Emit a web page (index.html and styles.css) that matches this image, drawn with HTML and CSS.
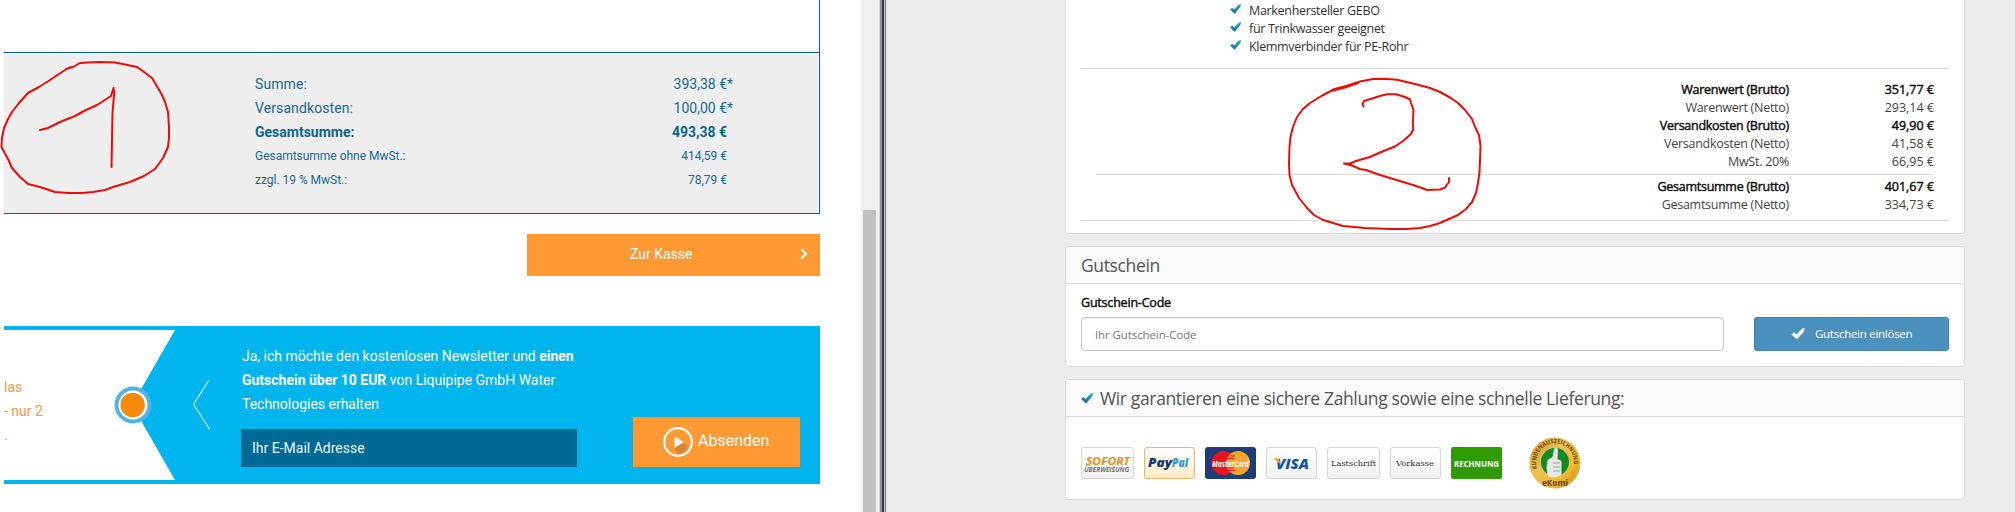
FILE: index.html
```html
<!DOCTYPE html>
<html lang="de">
<head>
<meta charset="utf-8">
<title>Warenkorb</title>
<link rel="stylesheet" href="styles.css">
</head>
<body>
<svg class="defs" width="0" height="0">
  <defs>
    <linearGradient id="teal" x1="0" y1="0" x2="0" y2="1"><stop offset="0" stop-color="#3aaed0"/><stop offset="1" stop-color="#11678f"/></linearGradient>
    <linearGradient id="gold" x1="0" y1="0" x2="1" y2="1"><stop offset="0" stop-color="#c98a1c"/><stop offset=".4" stop-color="#f0c356"/><stop offset=".7" stop-color="#f2b92f"/><stop offset="1" stop-color="#b87412"/></linearGradient>
    <symbol id="tick" viewBox="0 0 12 11"><path d="M0 6 2.400 4l2.200 2L9.600.600 12 0 11.600 3 5 10.600Z"/></symbol>
  </defs>
</svg>
<div class="screen">
  <section class="shop-a">
    <div class="items"></div>
    <dl class="totals">
      <div><dt>Summe:</dt><dd>393,38 €<i>*</i></dd></div>
      <div><dt>Versandkosten:</dt><dd>100,00 €<i>*</i></dd></div>
      <div class="strong"><dt>Gesamtsumme:</dt><dd>493,38 €<i></i></dd></div>
      <div class="small"><dt>Gesamtsumme ohne MwSt.:</dt><dd>414,59 €<i></i></dd></div>
      <div class="small"><dt>zzgl. 19 % MwSt.:</dt><dd>78,79 €<i></i></dd></div>
    </dl>
    <div class="checkout"><span>Zur Kasse</span>
      <svg width="8" height="12" viewBox="0 0 8 12"><path d="M1.300 1.200 6 6 1.300 10.800" fill="none" stroke="#fff" stroke-width="2"/></svg>
    </div>
    <div class="newsletter">
      <div class="teaser">
        <svg class="teaser-shape" width="220" height="150" viewBox="0 0 220 150">
          <path d="M0 0H171L128 75 171 150H0Z" fill="#fff"/>
          <circle cx="129" cy="75" r="18.500" fill="#52b2e6"/><circle cx="129" cy="75" r="14.500" fill="#fff"/><circle cx="128.600" cy="75" r="12.200" fill="#f68a0c"/>
          <path d="M205 50 189.500 74.500 205.500 99" fill="none" stroke="#c9f1ff" stroke-width="1.200"/>
        </svg>
        <p>las<br>- nur 2<br>.</p>
      </div>
      <div class="signup">
        <p>Ja, ich möchte den kostenlosen Newsletter und <b>einen</b><br><b>Gutschein über 10 EUR</b> von Liquipipe GmbH Water<br>Technologies erhalten</p>
        <div class="email">Ihr E-Mail Adresse</div>
      </div>
      <div class="send">
        <svg width="30" height="30" viewBox="0 0 30 30"><path d="m21 15 4 5a12 12 0 0 1-10 7l-4-6Z" fill="#d98530"/><circle cx="15" cy="15" r="13.800" fill="none" stroke="#fff" stroke-width="2.200"/><path d="M11.500 9.500 21 15l-9.500 6Z" fill="#fff"/></svg>
        <span>Absenden</span>
      </div>
    </div>
  </section>
  <div class="scrollbar"><div class="thumb"></div></div>
  <div class="frame"></div>
  <section class="shop-b">
    <div class="panel cart">
      <ul class="features">
        <li><svg width="11" height="10"><use href="#tick" fill="url(#teal)"/></svg><span>Markenhersteller GEBO</span></li>
        <li><svg width="11" height="10"><use href="#tick" fill="url(#teal)"/></svg><span>für Trinkwasser geeignet</span></li>
        <li><svg width="11" height="10"><use href="#tick" fill="url(#teal)"/></svg><span>Klemmverbinder für PE-Rohr</span></li>
      </ul>
      <div class="sums">
        <dl class="rows">
          <div class="gross"><dt>Warenwert (Brutto)</dt><dd>351,77 €</dd></div>
          <div><dt>Warenwert (Netto)</dt><dd>293,14 €</dd></div>
          <div class="gross"><dt>Versandkosten (Brutto)</dt><dd>49,90 €</dd></div>
          <div><dt>Versandkosten (Netto)</dt><dd>41,58 €</dd></div>
          <div><dt>MwSt. 20%</dt><dd>66,95 €</dd></div>
        </dl>
        <dl class="rows grand">
          <div class="gross"><dt>Gesamtsumme (Brutto)</dt><dd>401,67 €</dd></div>
          <div><dt>Gesamtsumme (Netto)</dt><dd>334,73 €</dd></div>
        </dl>
      </div>
    </div>
    <div class="panel">
      <h2>Gutschein</h2>
      <div class="voucher">
        <label>Gutschein-Code</label>
        <div class="line">
          <div class="code">Ihr Gutschein-Code</div>
          <div class="redeem"><svg width="14" height="12"><use href="#tick" fill="#fff"/></svg><span>Gutschein einlösen</span></div>
        </div>
      </div>
    </div>
    <div class="panel">
      <h2 class="guarantee"><svg width="12" height="11"><use href="#tick" fill="url(#teal)"/></svg><span>Wir garantieren eine sichere Zahlung sowie eine schnelle Lieferung:</span></h2>
      <div class="cards">
        <div class="card sofort"><svg width="51" height="30"><text x="4" y="17" textLength="44" lengthAdjust="spacingAndGlyphs" font-size="11" font-weight="700" fill="#ef8a13">SOFORT</text><text x="2" y="24" textLength="45" lengthAdjust="spacingAndGlyphs" font-size="6.500" font-weight="600" fill="#555">ÜBERWEISUNG</text></svg></div>
        <div class="card paypal"><svg width="49" height="30"><text x="3" y="19" textLength="24" lengthAdjust="spacingAndGlyphs" font-size="13" font-weight="800" fill="#14386e">Pay</text><text x="27" y="19" textLength="16" lengthAdjust="spacingAndGlyphs" font-size="13" font-weight="800" fill="#2f9bd6">Pal</text></svg></div>
        <div class="card master"><svg width="51" height="32"><circle cx="18.500" cy="16" r="12" fill="#e8131c"/><circle cx="33" cy="16" r="12" fill="#f3a62a"/><path d="M22 9h8M21 11.500h8M21 21h8M22 23.500h8" stroke="#e8131c"/><text x="7" y="19.500" textLength="37" lengthAdjust="spacingAndGlyphs" font-size="8.500" font-weight="700" fill="#fff">MasterCard</text></svg></div>
        <div class="card"><svg width="49" height="30"><text x="9" y="21" textLength="33" lengthAdjust="spacingAndGlyphs" font-size="14.500" font-weight="800" fill="#15539b">VISA</text><path d="M6.500 10.300h5l2 6Z" fill="#f0a81c"/></svg></div>
        <div class="card serif"><svg width="51" height="30"><text x="3" y="18" textLength="45" lengthAdjust="spacingAndGlyphs" font-size="8">Lastschrift</text></svg></div>
        <div class="card serif"><svg width="49" height="30"><text x="5" y="18" textLength="38" lengthAdjust="spacingAndGlyphs" font-size="8">Vorkasse</text></svg></div>
        <div class="card invoice"><svg width="51" height="32"><text x="3" y="19.500" textLength="45" lengthAdjust="spacingAndGlyphs" font-size="9.500" font-weight="700" fill="#fff">RECHNUNG</text></svg></div>
        <svg class="seal" width="52" height="52" viewBox="0 0 52 52">
          <circle cx="26" cy="26" r="25.500" fill="url(#gold)"/><circle cx="26" cy="26" r="24" fill="none" stroke="#e9b94c"/>
          <path id="arc" d="M8.100 31.600A19 19 0 1 1 43.900 31.600" fill="none"/>
          <text class="seal-ring"><textPath href="#arc" textLength="68" lengthAdjust="spacingAndGlyphs">KUNDENAUSZEICHNUNG</textPath></text>
          <circle cx="26" cy="25" r="15" fill="#d9c25c"/><circle cx="26" cy="25" r="14" fill="#168a22"/>
          <path d="M25 12q3-3 4 1l-.500 9 4 2v14l-5 2q-7 1-9-2l-1-8 1-7 5-3Z" fill="#e4e8e4"/>
          <path d="M24 26h7M24 30h7M24 34h7" stroke="#9aa69c"/>
          <text class="seal-name" x="13" y="48.500" textLength="26" lengthAdjust="spacingAndGlyphs">eKomi</text>
        </svg>
      </div>
    </div>
  </section>
  <svg class="marks" width="2015" height="512">
    <polyline points="66,69 73,67 80,63 88,62.500 100,62 115,62.500 125,64.500 137,67 144,72 152,78 158,88 162,95 165,102 168,112 169,127 169,138 168,147 163,158 155,169 144,176 130,182 113,187 105,190 93,192 82,193 68,193 55,192 40,187 28,184 20,177 12,168 9,161 1.500,147 2,138 4,128 8,119 12,112 19,103 28,93 39,87 50,80 62,72 70,67"/>
    <polyline points="40,130 48,128 60,122 75,116 86,110 97,105 111,96 113.500,88 114.200,93 112.500,113 112,140 111.500,167"/>
    <polyline points="1323,95.500 1333,89.500 1346,86 1360,81.500 1373,79 1385,78.800 1397,79.700 1417,84.500 1430,88 1440,92 1450,97.500 1458,103 1465,110 1472,119 1475,127 1479,135 1480.500,146 1480,160 1479.500,172 1478,183 1476,193 1472,202 1466,209 1458,215 1440,223 1430,226 1420,228 1406,229 1390,229 1365,228 1343,226 1333,223 1323,220 1314,215 1307,208 1299,198 1292,185 1289.500,175 1289,163 1289.500,147 1290.500,137 1293,127 1297,117 1303,109 1310,103 1323,95 1331,91 1345,87.500 1358,83"/>
    <polyline points="1363.500,106.500 1362.500,104 1364,101 1380,96 1387,94.200 1396,94.300 1405,97 1410,99.500 1411,103 1413.500,110 1412.800,123 1413.300,129 1411,134 1403,141 1395,146.500 1380,152.500 1370,157 1356,161 1350,163.500 1344,163.500 1352,165.500 1360,169 1366,170 1380,175 1413,185 1422,188 1427,190 1440,189.500 1445,187.500 1449,182 1449,178"/>
  </svg>
</div>
</body>
</html>
```
FILE: styles.css
```css
* { box-sizing: border-box; }
body { margin: 0; background: #fff; }
dl, dd, dt, p, ul, h2 { margin: 0; padding: 0; }
svg { display: block; flex: none; }
.defs { position: absolute; }
.screen { position: relative; display: flex; width: 2015px; height: 512px; overflow: hidden; }

.shop-a { width: 861px; padding: 0 41px 0 4px; font: 14px/24px Roboto, sans-serif; color: #176a91; }
.items { height: 52px; border-right: 1px solid #0b668e; }
.totals { height: 162px; padding: 19px 86px 0 251px; background: #eee; border: solid #0b668e; border-width: 1px 1px 1px 0; }
.totals div { display: flex; justify-content: space-between; height: 24px; }
.totals dt { letter-spacing: .1px; }
.totals i { display: inline-block; width: 6px; font-style: normal; }
.totals .strong { font-weight: 700; color: #0b668e; }
.totals .strong dt { letter-spacing: 0; }
.totals .small { font-size: 12px; }
.totals .small dt { letter-spacing: -.02px; }
.checkout { display: flex; align-items: center; width: 293px; height: 42px; margin: 20px 0 50px auto; padding: 0 12px 2px 103px; background: #f93; color: #fff; justify-content: space-between; }
.newsletter { display: flex; height: 158px; padding: 4px 0; background: #00b5ee; color: #fff; }
.teaser { position: relative; width: 237px; height: 150px; }
.teaser p { position: absolute; top: 45px; left: 0; color: #f0964c; }
.signup { width: 336px; padding-top: 14px; }
.signup p { padding-left: 1px; white-space: nowrap; letter-spacing: -.01px; }
.email { height: 38px; margin-top: 13px; padding: 0 11px; line-height: 38px; background: #006a94; color: #e8f6fc; }
.send { display: flex; gap: 5px; width: 167px; height: 50px; margin: 87px 0 0 56px; padding: 10px 0 0 30px; background: #f93; font-size: 16px; line-height: 27px; box-shadow: 0 0 1px #a98a50; }

.scrollbar { width: 18px; padding: 210px 3px 0 2px; background: #f0f0f0; }
.thumb { height: 302px; background: #c1c1c1; }
.frame { width: 8px; background: linear-gradient(90deg, #d8d8d8 0 1px, #8b9091 1px 3px, #3a4044 3px 5px, #b4b9bd 5px 6px, #82888e 6px 7px, #e2e2e2 7px); }

.shop-b { flex: 1; padding: 0 50px 0 178px; background: #ececec; font: 12.500px/18px "Open Sans", "Noto Sans", sans-serif; color: #444; }
.panel { height: 121px; margin-bottom: 12px; background: #fff; border: 1px solid #dadada; border-radius: 3px; }
.cart { height: 234px; border-top: 0; border-radius: 0 0 3px 3px; padding: 2px 15px 0; }
.features { height: 66px; padding-left: 149px; list-style: none; color: #333; letter-spacing: -.32px; }
.features li { display: flex; gap: 8px; padding-top: 2px; height: 18px; line-height: 14px; }
.sums { height: 153px; padding: 12px 15px 0; border: solid #d9d9d9; border-width: 1px 0; }
.rows { height: 93px; }
.rows div { display: flex; justify-content: flex-end; text-align: right; }
.rows dt { letter-spacing: -.26px; }
.rows dd { width: 145px; }
.rows .gross, .voucher label { color: #111; -webkit-text-stroke: .45px #111; }
.grand { padding-top: 3px; height: 45px; border-top: 1px solid #d9d9d9; }
h2 { height: 37px; padding-left: 15px; background: #fafafa; border-bottom: 1px solid #dadada; border-radius: 3px 3px 0 0; font-size: 17.500px; font-weight: 400; line-height: 37px; letter-spacing: -.36px; color: #555; }
.guarantee { display: flex; align-items: center; gap: 7px; white-space: nowrap; }
.voucher { padding: 10px 15px 0; }
.voucher label { display: block; height: 23px; letter-spacing: -.2px; }
.line { display: flex; justify-content: space-between; }
.code { width: 643px; height: 34px; padding: 0 13px; border: 1px solid #c6c6c6; border-radius: 4px; font-size: 11.500px; line-height: 34px; letter-spacing: -.1px; color: #777; box-shadow: inset 0 1px 1px #eee; }
.redeem { display: flex; align-items: center; gap: 10px; width: 195px; height: 34px; padding: 0 0 1px 36px; background: #4b91be; border: 1px solid #3d7fab; border-radius: 3px; font-size: 11.500px; letter-spacing: -.27px; color: #fff; }
.cards { display: flex; gap: 10px; padding: 30px 15px 0; }
.cards svg { overflow: visible; }
.card { height: 32px; border: 1px solid #d6d6d6; border-radius: 3px; background: linear-gradient(#fff, #f1f1f1); font-family: "Open Sans", sans-serif; font-style: italic; }
.paypal { border-color: #eeb56e; background: linear-gradient(#fff, #fdebc8); }
.master { border: 0; background: #1d3c78; }
.serif { font-family: "DejaVu Serif", serif; font-style: normal; fill: #333; }
.invoice { border: 0; background: #2e9b00; font-style: normal; border-radius: 2px; }
.seal { margin: -10px 0 0 17px; }
.seal-ring { font: 700 6px "Open Sans", sans-serif; fill: #6d4a10; }
.seal-name { font: 700 9px "Open Sans", sans-serif; fill: #65420c; }
.marks { position: absolute; top: 0; left: 0; fill: none; stroke: #ea0c0b; stroke-width: 2; stroke-linejoin: round; stroke-linecap: round; }
```
